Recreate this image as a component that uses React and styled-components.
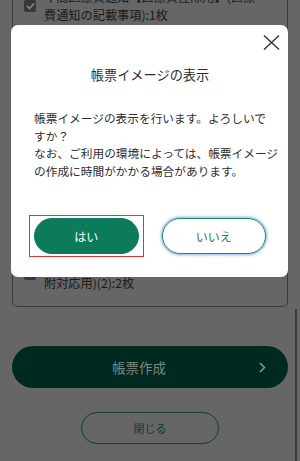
import React from 'react';
import styled, { createGlobalStyle } from 'styled-components';

const GlobalStyle = createGlobalStyle`
  html, body {
    margin: 0;
    padding: 0;
    background: #666666;
  }
  body {
    font-family: "Noto Sans CJK JP", "Noto Sans", sans-serif;
  }
`;

const Page = styled.div`
  position: relative;
  width: 300px;
  height: 461px;
  overflow: hidden;
  background: #666666;
`;

// the list is scrolled a little, so the first row is cut at the top
const Content = styled.div`
  margin-top: -28px;
  padding: 0 12px;
`;

const Card = styled.div`
  border: 1px solid #3c3c3c;
  border-radius: 5px;
  padding: 15px 16px 14px 11px;
  display: flex;
  flex-direction: column;
  gap: 14px;
`;

const CheckRow = styled.div`
  display: flex;
  align-items: center;
  gap: 8px;
`;

const Box = styled.span`
  flex: 0 0 12px;
  width: 12px;
  height: 12px;
  border-radius: 2px;
  background: #383838;
  display: flex;
  align-items: center;
  justify-content: center;
`;

const RowText = styled.span`
  font-size: 12.2px;
  line-height: 18px;
  color: #1a1a1a;
  white-space: nowrap;
`;

const MainButton = styled.button`
  margin-top: 39px;
  width: 100%;
  height: 42px;
  border: none;
  border-radius: 21px;
  background: #00291f;
  display: grid;
  grid-template-columns: 1fr auto 1fr;
  align-items: center;
  padding: 0 22px 0 0;
  font-family: inherit;
  font-size: 13.5px;
  color: #7c8883;
  span { grid-column: 2; }
  svg { grid-column: 3; justify-self: end; }
`;

const CloseLink = styled.button`
  display: block;
  margin: 24px auto 0;
  width: 138px;
  height: 32px;
  border: 1px solid #0f4233;
  border-radius: 16px;
  background: transparent;
  font-family: inherit;
  font-size: 11px;
  color: #0f3d2f;
`;

const ScrollThumb = styled.div`
  position: absolute;
  right: 3px;
  top: 309px;
  bottom: 0;
  width: 2px;
  background: #3a3a3a;
`;

const Backdrop = styled.div`
  position: fixed;
  inset: 0;
  display: flex;
  align-items: flex-start;
  padding: 25px 12px 0 11px;
`;

const Dialog = styled.div`
  width: 100%;
  background: #ffffff;
  border-radius: 7px;
  padding: 9px 22px 23px 23px;
  box-sizing: border-box;
`;

const CloseRow = styled.div`
  display: flex;
  justify-content: flex-end;
  margin-right: -14px;
`;

const CloseBtn = styled.button`
  width: 18px;
  height: 16px;
  padding: 0;
  border: none;
  background: none;
  display: flex;
  align-items: center;
  justify-content: center;
`;

const Title = styled.h2`
  margin: 15px 0 0;
  font-size: 13.2px;
  font-weight: 400;
  line-height: 20px;
  text-align: center;
  color: #2e2e2e;
`;

const Message = styled.p`
  margin: 24px 0 0;
  font-size: 11.7px;
  line-height: 17.5px;
  color: #2e2e2e;
  white-space: nowrap;
`;

const Actions = styled.div`
  margin-top: 39px;
  display: grid;
  grid-template-columns: 1fr 1fr;
  gap: 23px;
`;

const Highlight = styled.div`
  position: relative;
  &::after {
    content: '';
    position: absolute;
    inset: -3px -5px;
    border: 1.5px solid #e5323b;
    pointer-events: none;
  }
`;

const Pill = styled.button`
  width: 100%;
  height: 36px;
  border-radius: 18px;
  font-family: inherit;
  font-size: 12px;
  border: 1px solid ${p => (p.primary ? '#0b7b5b' : '#22876a')};
  background: ${p => (p.primary ? '#0b7b5b' : '#ffffff')};
  color: ${p => (p.primary ? '#ffffff' : '#1a7d5e')};
  box-shadow: ${p => (p.primary ? 'none' : '0 0 0 1.5px rgba(170, 200, 240, 0.8), 0 0 3px 2px rgba(190, 215, 245, 0.65)')};
`;

const Check = () => (
  <svg width="9" height="8" viewBox="0 0 9 8">
    <polyline points="1,4 3.5,6.5 8,1.5" fill="none" stroke="#8c8c8c" strokeWidth="1.5" />
  </svg>
);

const items = [
  ['年間医療費通知【医療費控除用】(医療', '費通知の記載事項):1枚'],
  ['医療費通知書(医療費控除の明細書', '添附対応用)(1):1枚'],
  ['月別医療費通知【医療費控除用】(医療', '費通知の記載事項)(国保分の', '記載事項):1枚'],
  ['医療費通知書(医療費控除の明細書', '添附対応用)(1):1枚'],
  ['年間医療費通知【医療費控除用】(医療', '費通知の記載事項)(2):2枚'],
  ['医療費通知書(医療費控除の明細書添', '附対応用)(2):2枚'],
];

export default function App() {
  return (
    <>
      <GlobalStyle />
      <Page>
        <Content>
          <Card>
            {items.map((lines, i) => (
              <CheckRow key={i}>
                <Box><Check /></Box>
                <RowText>
                  {lines.map((l, j) => (
                    <React.Fragment key={j}>
                      {j > 0 && <br />}
                      {l}
                    </React.Fragment>
                  ))}
                </RowText>
              </CheckRow>
            ))}
          </Card>
          <MainButton>
            <span>帳票作成</span>
            <svg width="7" height="11" viewBox="0 0 7 11">
              <polyline points="1,1 5.5,5.5 1,10" fill="none" stroke="#8a9590" strokeWidth="1.5" />
            </svg>
          </MainButton>
          <CloseLink>閉じる</CloseLink>
        </Content>
        <ScrollThumb />
      </Page>

      <Backdrop>
        <Dialog>
          <CloseRow>
            <CloseBtn aria-label="閉じる">
              <svg width="17" height="15" viewBox="0 0 17 15">
                <line x1="1" y1="0.5" x2="16" y2="14.5" stroke="#333" strokeWidth="1.4" />
                <line x1="16" y1="0.5" x2="1" y2="14.5" stroke="#333" strokeWidth="1.4" />
              </svg>
            </CloseBtn>
          </CloseRow>
          <Title>帳票イメージの表示</Title>
          <Message>
            帳票イメージの表示を行います。よろしいで<br />
            すか？<br />
            なお、ご利用の環境によっては、帳票イメージ<br />
            の作成に時間がかかる場合があります。
          </Message>
          <Actions>
            <Highlight>
              <Pill primary>はい</Pill>
            </Highlight>
            <Pill>いいえ</Pill>
          </Actions>
        </Dialog>
      </Backdrop>
    </>
  );
}
